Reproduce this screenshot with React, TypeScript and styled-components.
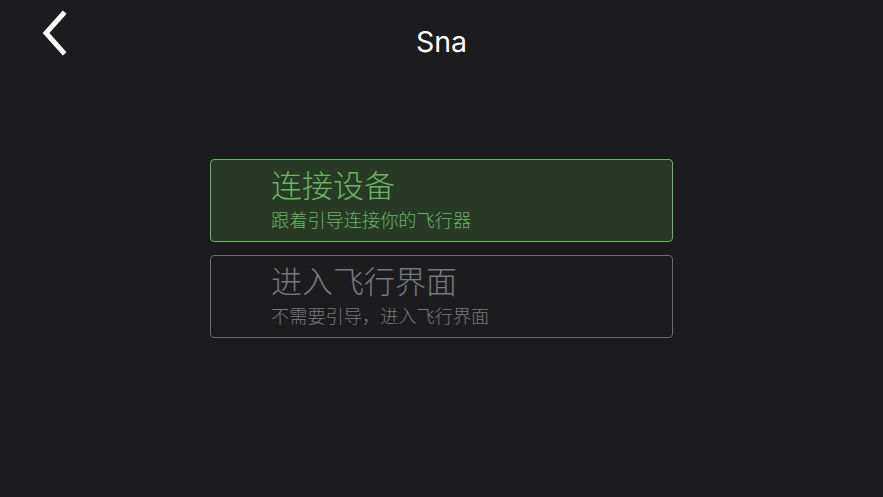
import React from "react";
import styled, { createGlobalStyle } from "styled-components";

const GlobalStyle = createGlobalStyle`
  html, body {
    margin: 0;
    padding: 0;
    background: #1c1c1e;
  }
  body {
    font-family: "Noto Sans", "Noto Sans CJK SC", sans-serif;
  }
`;

const Page = styled.div`
  width: 883px;
  height: 497px;
  background: #1c1c1e;
  display: flex;
  flex-direction: column;
  overflow: hidden;
`;

const Header = styled.div`
  position: relative;
  height: 84px;
  display: flex;
  align-items: center;
  justify-content: center;
`;

const BackButton = styled.button`
  position: absolute;
  left: 38px;
  top: 8px;
  width: 34px;
  height: 50px;
  padding: 0;
  border: none;
  background: transparent;
  cursor: pointer;
`;

const Title = styled.h1`
  margin: 0;
  font-family: Inter, "Noto Sans", sans-serif;
  font-weight: 400;
  font-size: 28.5px;
  color: #ffffff;
  line-height: 1;
`;

const Options = styled.div`
  display: flex;
  flex-direction: column;
  align-items: center;
  gap: 13px;
  padding-top: 75px;
`;

const Card = styled.div<{ $active?: boolean }>`
  box-sizing: border-box;
  width: 463px;
  height: 83px;
  border-radius: 4px;
  border: 1.5px solid ${p => (p.$active ? "#6bb366" : "#6a6d71")};
  background: ${p => (p.$active ? "#263a24" : "transparent")};
  padding: 6px 0 0 60px;
  display: flex;
  flex-direction: column;
  gap: 6px;
  cursor: pointer;
`;

const CardTitle = styled.div<{ $active?: boolean }>`
  font-family: "Noto Sans CJK SC", sans-serif;
  font-weight: 300;
  font-size: 31px;
  line-height: 36px;
  color: ${p => (p.$active ? "#6cb368" : "#76797d")};
`;

const CardSub = styled.div<{ $active?: boolean }>`
  font-family: "Noto Sans CJK SC", sans-serif;
  font-weight: 300;
  font-size: 18.2px;
  line-height: 22px;
  color: ${p => (p.$active ? "#6cb368" : "#76797d")};
`;

export default function App() {
  return (
    <Page>
      <GlobalStyle />
      <Header>
        <BackButton aria-label="back">
          <svg width="34" height="50" viewBox="0 0 34 50">
            <path d="M25 6 L8 25 L25 44" fill="none" stroke="#ffffff" strokeWidth="5" strokeLinecap="square" strokeLinejoin="miter" />
          </svg>
        </BackButton>
        <Title>Sna</Title>
      </Header>
      <Options>
        <Card $active>
          <CardTitle $active>连接设备</CardTitle>
          <CardSub $active>跟着引导连接你的飞行器</CardSub>
        </Card>
        <Card>
          <CardTitle>进入飞行界面</CardTitle>
          <CardSub>不需要引导，进入飞行界面</CardSub>
        </Card>
      </Options>
    </Page>
  );
}
